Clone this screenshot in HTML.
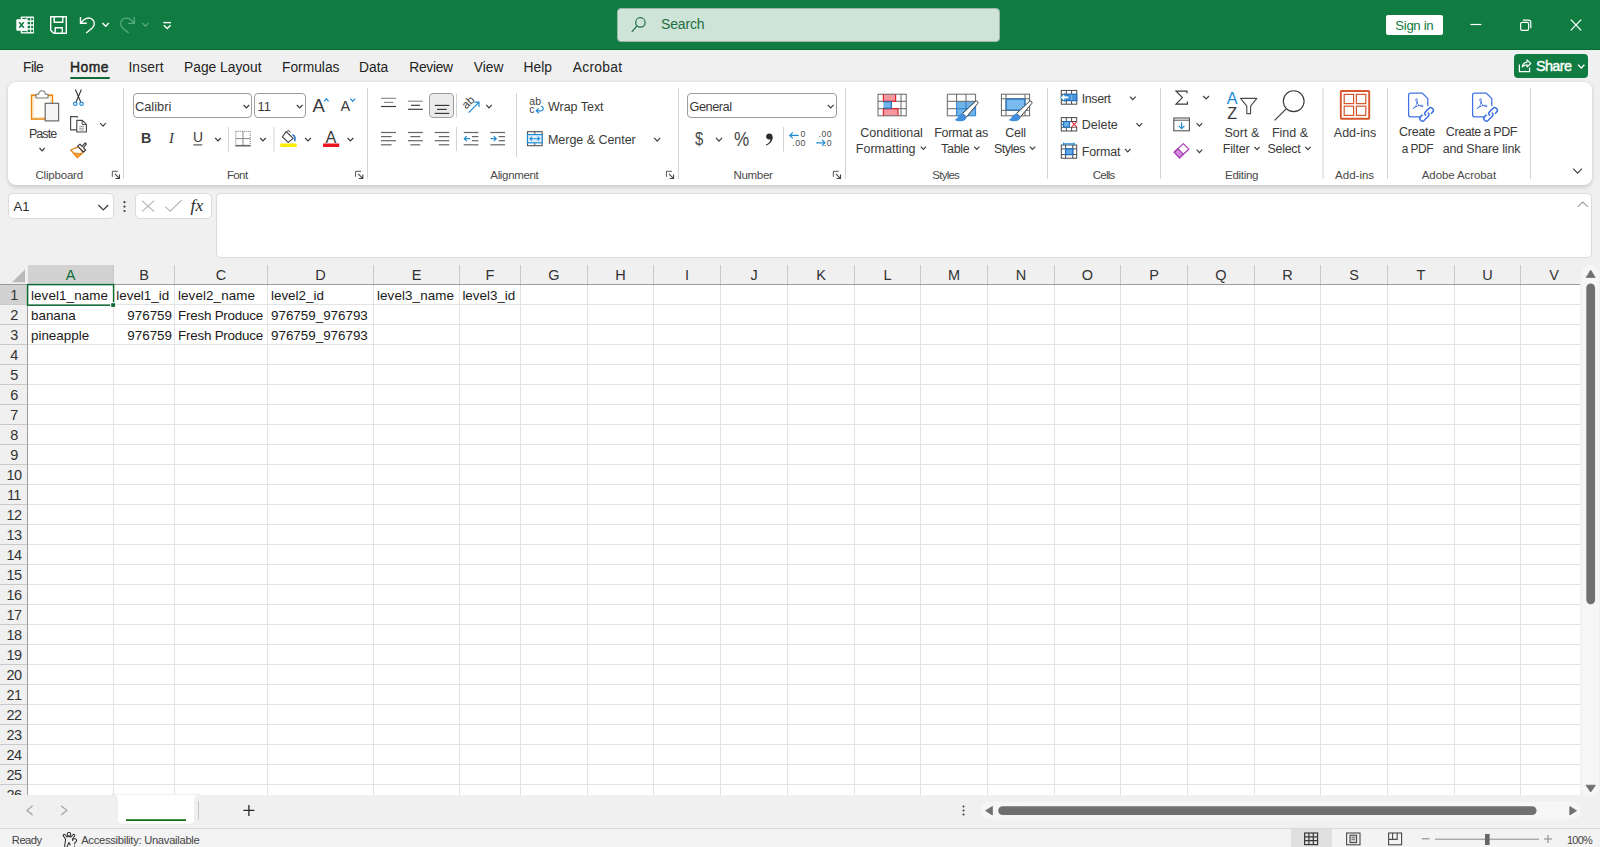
<!DOCTYPE html>
<html lang="en">
<head>
<meta charset="utf-8">
<title>Excel</title>
<style>
*{box-sizing:border-box;margin:0;padding:0}
html,body{width:1600px;height:847px;overflow:hidden;background:#f0f0f0}
body{font-family:"Liberation Sans",sans-serif;color:#242424;position:relative;font-size:13px}
.abs{position:absolute}
#title{left:0;top:0;width:1600px;height:50px;background:#107c41;border-bottom:1px solid #0b6a35}
#search{left:617px;top:8px;width:383px;height:33.5px;background:#cfe4d9;border-radius:4px;border:1px solid #9fb5a8}
#search span{position:absolute;left:43px;top:6.8px;font-size:14px;color:#1e6e42;letter-spacing:-.15px}
#signin{left:1386px;top:15px;width:56.6px;height:19.6px;background:#fff;border-radius:2px;color:#107c41;font-size:13.2px;text-align:center;line-height:21px;letter-spacing:-.35px}
.tab{top:59.6px;font-size:13.8px;color:#242424;white-space:nowrap}
#homeul{left:70px;top:77px;width:40px;height:2px;background:#0f6c36;border-radius:1px}
#share{left:1514px;top:53.5px;width:74.3px;height:24.5px;background:#107c41;border-radius:4px;color:#fff;font-size:14.4px;-webkit-text-stroke:.4px #fff}
#ribbon{left:8px;top:82px;width:1584px;height:103px;background:#fff;border-radius:8px;box-shadow:0 1.5px 4px rgba(0,0,0,.17)}
.sep{width:1px;background:#d6d6d6;top:89px;height:90px}
.glabel{top:168.5px;font-size:11.5px;color:#4a4a4a;white-space:nowrap;transform:translateX(-50%)}
.rt{font-size:12.5px;color:#3a3a3a;white-space:nowrap}
.ctr{transform:translateX(-50%);text-align:center}
.combo{background:#fff;border:1px solid #9c9c9c;border-radius:4px;height:24px}
#namebox{left:8px;top:193px;width:106px;height:25.6px;background:#fff;border-radius:5px;border:1px solid #dbdbdb}
#fxbox{left:135px;top:193px;width:77px;height:25.6px;background:#fff;border-radius:5px;border:1px solid #dbdbdb}
#fbar{left:216px;top:193px;width:1376.4px;height:64.6px;background:#fff;border-radius:5px;border:1px solid #dbdbdb}
#grid{left:0;top:265px;width:1580px;height:530px;background:#fff;overflow:hidden}
#colhdr{left:0;top:0;width:1580px;height:20px;background:#f0f0f0;border-bottom:1px solid #9b9b9b}
#rowhdr{left:0;top:20px;width:28px;height:520px;background:#f0f0f0;border-right:1px solid #9b9b9b}
.ch{top:0;height:19px;line-height:20px;font-size:14.5px;color:#333;text-align:center;border-right:1px solid #c9c9c9}
.rh{left:0;width:27px;height:20px;line-height:21px;font-size:14.5px;letter-spacing:-.55px;padding-left:.8px;color:#262626;text-align:center;border-bottom:1px solid #c9c9c9}
.vl{top:20px;width:1px;height:520px;background:#e3e3e3}
.hl{left:28px;height:1px;width:1552px;background:#e3e3e3}
.cell{height:20px;line-height:22px;font-size:13.4px;color:#1a1a1a;white-space:nowrap}
#tabbar{left:0;top:795px;width:1600px;height:33px;background:#f0f0f0}
#status{left:0;top:828px;width:1600px;height:19px;background:#f3f3f3;border-top:1px solid #d9d9d9;font-size:11.2px;color:#444;white-space:nowrap}
</style>
</head>
<body>
<!-- TITLE BAR -->
<div id="title" class="abs"></div>
<div id="search" class="abs"><span>Search</span></div>
<div id="signin" class="abs">Sign in</div>

<svg class="abs" style="left:0;top:0" width="200" height="50" fill="none" stroke="#fff" stroke-width="1.3">
<!-- excel icon -->
<g stroke="none" fill="#fff">
<path d="M21.5 16.5H33.2a.8.8 0 0 1 .8.8V32.7a.8.8 0 0 1-.8.8H21.5a.8.8 0 0 1-.8-.8V17.3a.8.8 0 0 1 .8-.8Z"/>
<rect x="16.3" y="19.3" width="10.4" height="11.4" rx="1"/>
</g>
<g stroke="none" fill="#107c41"><rect x="27.6" y="18" width="2.6" height="2.4"/><rect x="27.6" y="21.9" width="2.6" height="2.4"/><rect x="27.6" y="25.8" width="2.6" height="2.4"/><rect x="27.6" y="29.7" width="2.6" height="2.4"/><rect x="31.2" y="18" width="2.0" height="2.4"/><rect x="31.2" y="21.9" width="2.0" height="2.4"/><rect x="31.2" y="25.8" width="2.0" height="2.4"/><rect x="31.2" y="29.7" width="2.0" height="2.4"/><rect x="22.2" y="17.8" width="4.4" height="1.2"/><rect x="22.2" y="31" width="4.4" height="1.2"/></g>
<path d="M19.2 22.2L23.8 27.8M23.8 22.2L19.2 27.8" stroke="#107c41" stroke-width="1.5"/>
<!-- save -->
<path d="M50.7 16.7H66.3V33.3H53.7L50.7 30.3Z M54.2 16.7V22.3H62.8V16.7 M55.2 33.3V27.7H62.3V33.3" stroke-width="1.4" stroke-linejoin="round"/>
<!-- undo -->
<path d="M80.5 17V23.3H86.8" stroke-width="1.4"/>
<path d="M80.8 23C84 18.5 89 16.5 92.5 19.5C95.3 22.2 94.6 25.8 92 28.3L86.2 33" stroke-width="1.4"/>
<path d="M102.5 23L105.7 26.2L108.9 23" stroke-width="1.4"/>
<!-- redo faded -->
<g stroke="#58ab80">
<path d="M134.3 17V23.3H128" stroke-width="1.3"/>
<path d="M134 23C130.8 18.5 125.8 16.5 122.3 19.5C119.5 22.2 120.2 25.8 122.8 28.3L128.6 33" stroke-width="1.3"/>
<path d="M142.3 23L145.4 26.2L148.5 23" stroke-width="1.2"/>
</g>
<!-- qat -->
<path d="M163.3 22.6H171" stroke-width="1.4"/>
<path d="M163.8 25.3L167.2 28.6L170.6 25.3" stroke-width="1.4"/>
</svg>
<!-- TABS -->
<div class="abs tab" style="left:23px;letter-spacing:-.5px">File</div>
<div class="abs tab" style="left:70px;top:58.9px;font-size:13.9px;-webkit-text-stroke:.45px #242424;letter-spacing:.45px">Home</div>
<div class="abs tab" style="left:128.4px;letter-spacing:.12px">Insert</div>
<div class="abs tab" style="left:184px">Page Layout</div>
<div class="abs tab" style="left:282px">Formulas</div>
<div class="abs tab" style="left:359px">Data</div>
<div class="abs tab" style="left:409.3px;letter-spacing:-.3px">Review</div>
<div class="abs tab" style="left:473.8px">View</div>
<div class="abs tab" style="left:523.6px">Help</div>
<div class="abs tab" style="left:572.8px;letter-spacing:.27px">Acrobat</div>
<div id="homeul" class="abs"></div>
<div id="share" class="abs"><span class="abs" style="left:22px;top:4.4px;letter-spacing:-.62px">Share</span></div>

<svg class="abs" style="left:600px;top:0" width="1000" height="82" viewBox="600 0 1000 82" fill="none">
<circle cx="640.4" cy="22.4" r="4.7" stroke="#1e6e42" stroke-width="1.2"/><path d="M637 25.9L631.8 31.9" stroke="#1e6e42" stroke-width="1.2"/>
<path d="M1470.4 24.5H1481.4" stroke="#fff" stroke-width="1.2"/>
<rect x="1520.6" y="22.3" width="8" height="8" rx="1.6" stroke="#fff" stroke-width="1.2"/>
<path d="M1522.9 20.2H1528.4A2.4 2.4 0 0 1 1530.8 22.6V28.2" stroke="#fff" stroke-width="1.2"/>
<path d="M1570.8 19.6L1581.2 30.4M1581.2 19.6L1570.8 30.4" stroke="#fff" stroke-width="1.3"/>
<path d="M1519.4 64.4V71.6H1529.6V67.4" stroke="#fff" stroke-width="1.2"/>
<path d="M1522.2 67C1522.6 64.2 1524.4 62.4 1527 62.2V59.9L1530.8 63.5L1527 67V64.8C1525 64.8 1523.4 65.6 1522.2 67Z" stroke="#fff" stroke-width="1.1" stroke-linejoin="round"/>
<path d="M1578.2 64.8L1581.3 67.9L1584.4 64.8" stroke="#fff" stroke-width="1.4"/>
</svg>
<!-- RIBBON -->
<div id="ribbon" class="abs"></div>
<!--RB0-->
<div class="abs rt ctr" style="left:42.6px;top:127px;font-size:12.5px;letter-spacing:-0.91px;">Paste</div>
<div class="abs glabel" style="left:59.2px;letter-spacing:-0.18px">Clipboard</div>
<div class="abs combo" style="left:133px;top:93px;width:119px;height:25px"></div>
<div class="abs combo" style="left:254px;top:93px;width:52px;height:25px"></div>
<div class="abs rt" style="left:135px;top:99px;font-size:12.8px;">Calibri</div>
<div class="abs rt" style="left:257.5px;top:99px;font-size:12.8px;">11</div>
<div class="abs rt" style="left:312.5px;top:94.5px;font-size:18.5px;">A</div>
<div class="abs rt" style="left:340.5px;top:98px;font-size:14.5px;">A</div>
<div class="abs rt" style="left:141px;top:130px;font-size:14.3px;font-weight:bold">B</div>
<div class="abs rt" style="left:169px;top:129.5px;font-size:14.8px;font-family:'Liberation Serif',serif;font-style:italic">I</div>
<div class="abs rt" style="left:193px;top:130px;font-size:13.8px;">U</div>
<div class="abs rt" style="left:325.5px;top:127.5px;font-size:16.3px;">A</div>
<div class="abs glabel" style="left:237.2px;letter-spacing:-0.60px">Font</div>
<div class="abs" style="left:429px;top:93px;width:25.4px;height:25.4px;background:#ebebeb;border:1px solid #9d9d9d;border-radius:4px"></div>
<div class="abs rt" style="left:529.3px;top:96.5px;font-size:10.5px;line-height:8.4px;color:#444">ab<br>c</div>
<div class="abs rt" style="left:548px;top:100px;font-size:12.5px;letter-spacing:-0.03px;">Wrap Text</div>
<div class="abs rt" style="left:548px;top:133px;font-size:12.5px;letter-spacing:-0.04px;">Merge &amp; Center</div>
<div class="abs glabel" style="left:514.4px;letter-spacing:-0.33px">Alignment</div>
<div class="abs combo" style="left:687px;top:93px;width:150px;height:25px"></div>
<div class="abs rt" style="left:689.5px;top:99px;font-size:12.8px;letter-spacing:-0.50px;">General</div>
<div class="abs rt" style="left:695px;top:128.2px;font-size:19px;color:#4a4a4a;transform:scaleX(.78);transform-origin:0 0;">$</div>
<div class="abs rt" style="left:734.2px;top:128px;font-size:19.6px;color:#444;transform:scaleX(.87);transform-origin:0 0;">%</div>
<div class="abs glabel" style="left:753px;letter-spacing:-0.32px">Number</div>
<div class="abs rt ctr" style="left:891.6px;top:125.5px;font-size:12.5px;">Conditional</div>
<div class="abs rt ctr" style="left:885.7px;top:142px;font-size:12.5px;">Formatting</div>
<div class="abs rt ctr" style="left:961.1px;top:125.5px;font-size:12.5px;letter-spacing:-0.27px;">Format as</div>
<div class="abs rt ctr" style="left:955.3px;top:142px;font-size:12.5px;letter-spacing:-0.30px;">Table</div>
<div class="abs rt ctr" style="left:1015.6px;top:125.5px;font-size:12.5px;letter-spacing:-0.26px;">Cell</div>
<div class="abs rt ctr" style="left:1009.5px;top:142px;font-size:12.5px;letter-spacing:-0.47px;">Styles</div>
<div class="abs glabel" style="left:945.7px;letter-spacing:-0.75px">Styles</div>
<div class="abs rt" style="left:1081.7px;top:91.5px;font-size:12.5px;letter-spacing:-0.38px;">Insert</div>
<div class="abs rt" style="left:1081.7px;top:117.8px;font-size:12.5px;">Delete</div>
<div class="abs rt" style="left:1081.7px;top:145px;font-size:12.5px;letter-spacing:-0.18px;">Format</div>
<div class="abs glabel" style="left:1103.7px;letter-spacing:-0.75px">Cells</div>
<div class="abs rt" style="left:1226.8px;top:88.5px;font-size:16.2px;color:#1e8ad6">A</div>
<div class="abs rt" style="left:1227.2px;top:103.6px;font-size:16.2px;color:#3a3a3a">Z</div>
<div class="abs rt ctr" style="left:1241.9px;top:125.5px;font-size:12.5px;">Sort &amp;</div>
<div class="abs rt ctr" style="left:1236.2px;top:142px;font-size:12.5px;letter-spacing:-0.15px;">Filter</div>
<div class="abs rt ctr" style="left:1290px;top:125.5px;font-size:12.5px;">Find &amp;</div>
<div class="abs rt ctr" style="left:1284px;top:142px;font-size:12.5px;letter-spacing:-0.33px;">Select</div>
<div class="abs glabel" style="left:1241.6px;letter-spacing:-0.28px">Editing</div>
<div class="abs rt ctr" style="left:1355px;top:125.5px;font-size:12.5px;">Add-ins</div>
<div class="abs glabel" style="left:1354.6px">Add-ins</div>
<div class="abs rt ctr" style="left:1417px;top:125.2px;font-size:12.5px;letter-spacing:-0.27px;">Create</div>
<div class="abs rt ctr" style="left:1417.3px;top:142px;font-size:11.9px;letter-spacing:-0.50px;">a PDF</div>
<div class="abs rt ctr" style="left:1481.4px;top:125.2px;font-size:12.5px;letter-spacing:-0.44px;">Create a PDF</div>
<div class="abs rt ctr" style="left:1481.5px;top:141.6px;font-size:12.5px;letter-spacing:-0.16px;">and Share link</div>
<div class="abs glabel" style="left:1458.9px;letter-spacing:-0.09px">Adobe Acrobat</div>
<svg class="abs" style="left:0;top:80px" width="1600" height="110" viewBox="0 80 1600 110">
<g>
<rect x="31.6" y="95.2" width="20.8" height="23.8" fill="#fffdf7" stroke="#e8850f" stroke-width="1.6"/><rect x="33" y="96.6" width="18" height="21" fill="none" stroke="#fbe3b4" stroke-width="1.2"/>
<path d="M36 98V94.3H38.6C38.8 92 40.2 90.7 42 90.7S45.2 92 45.4 94.3H48V98Z" fill="#fff" stroke="#7a7a7a" stroke-width="1.1"/>
<rect x="45.2" y="103.3" width="13.4" height="17.6" fill="#f5f5f5" stroke="#6a6a6a" stroke-width="1.2"/>
</g>
<path d="M39.5 148.0L42.1 150.8L44.7 148.0" stroke="#3b3b3b" stroke-width="1.15" fill="none"/>
<g fill="none">
<path d="M75.4 89.5L80.6 101.8M81.4 89.5L76.2 101.8" stroke="#333" stroke-width="1.1"/>
<circle cx="75.3" cy="103.8" r="1.7" stroke="#1e8ad6" stroke-width="1.2"/>
<circle cx="81.5" cy="103.8" r="1.7" stroke="#1e8ad6" stroke-width="1.2"/>
</g>
<g fill="none" stroke="#4a4a4a" stroke-width="1.15">
<path d="M76.5 129.8H70.6V116.6H77L78 117.6"/>
<path d="M76.8 120.3H82.3L86.4 124.4V132H76.8Z" fill="#fff"/>
<path d="M82.2 120.5V124.6H86.2" stroke-width="1"/>
<path d="M79.2 126.6H84M79.2 128.3H84M79.2 130H84" stroke="#8a8a8a" stroke-width=".8"/>
</g>
<path d="M100.2 123.2L103.0 126.2L105.8 123.2" stroke="#3b3b3b" stroke-width="1.15" fill="none"/>
<g fill="none" stroke-linejoin="round">
<path d="M70.8 150L78.6 146.6L83 152.4L77.4 157.6Z" fill="#fff" stroke="#e07a10" stroke-width="1.3"/>
<path d="M74 153L81.6 153.6L77.4 157.4Z" fill="#f5a53a" stroke="#e07a10" stroke-width=".8"/>
<path d="M77.6 146.2L80 144.2L82 146.4L85.2 142.9L86.4 144.1L83.3 147.7L85.6 150L83.4 152Z" fill="#fff" stroke="#333" stroke-width="1.1"/>
</g>
<path d="M112.3 176.8V171.3H117.8" stroke="#555" stroke-width="1" fill="none"/><path d="M114.89999999999999 173.9L119.3 178.3M119.5 174.5V178.5H115.5" stroke="#444" stroke-width="1.1" fill="none"/>
<path d="M123.5 88V179" stroke="#d4d4d4" stroke-width="1"/>
<path d="M243.6 105.0L246.4 108.0L249.2 105.0" stroke="#3b3b3b" stroke-width="1.15" fill="none"/>
<path d="M296.8 105.0L299.7 108.0L302.6 105.0" stroke="#3b3b3b" stroke-width="1.15" fill="none"/>
<path d="M324.2 101.3L326.4 98.6L328.6 101.3" stroke="#1e8ad6" stroke-width="1.2" fill="none"/>
<path d="M350.4 98.6L352.8 101.4L355.2 98.6" stroke="#1e8ad6" stroke-width="1.2" fill="none"/>
<path d="M193.3 144.9H202.3" stroke="#444" stroke-width="1.1"/>
<path d="M215.2 138.0L218.0 141.0L220.8 138.0" stroke="#3b3b3b" stroke-width="1.15" fill="none"/>
<path d="M228.5 127V151.5" stroke="#d4d4d4" stroke-width="1"/>
<g fill="none" stroke="#777" stroke-width="1">
<path d="M235.8 131.4H250.2V144.8M235.8 131.4V144.8" stroke-dasharray="1 1"/>
<path d="M243 131.4V145M235.8 138.6H250.2" stroke="#8a8a8a"/>
<path d="M235.3 145.7H250.7" stroke="#666" stroke-width="1.6"/>
</g>
<path d="M260.2 138.0L263.0 141.0L265.8 138.0" stroke="#3b3b3b" stroke-width="1.15" fill="none"/>
<path d="M274.0 127V151.5" stroke="#d4d4d4" stroke-width="1"/>
<g fill="none">
<path d="M286.2 131.6L293.2 138.4L288.2 142.4L282.4 136.8Z" stroke="#3a3a3a" stroke-width="1.1" stroke-linejoin="round"/>
<path d="M286.6 131.5C288 130 290 130.8 290.4 132.6" stroke="#3a3a3a" stroke-width="1"/>
<path d="M292.4 134.6C294.6 135.6 295.4 138.5 294.6 141.2" stroke="#1c6fc4" stroke-width="1.5"/>
<rect x="280.3" y="143.5" width="16.4" height="3.5" fill="#ffee00"/>
</g>
<path d="M305.2 138.0L308.0 141.0L310.9 138.0" stroke="#3b3b3b" stroke-width="1.15" fill="none"/>
<rect x="323" y="143.5" width="16.2" height="3.5" fill="#f0141e"/>
<path d="M347.5 138.0L350.4 141.0L353.3 138.0" stroke="#3b3b3b" stroke-width="1.15" fill="none"/>
<path d="M355.6 176.8V171.3H361.1" stroke="#555" stroke-width="1" fill="none"/><path d="M358.20000000000005 173.9L362.6 178.3M362.8 174.5V178.5H358.8" stroke="#444" stroke-width="1.1" fill="none"/>
<path d="M367.5 88V179" stroke="#d4d4d4" stroke-width="1"/>
<path d="M381 98.3H396" stroke="#8a8a8a" stroke-width="1.15"/><path d="M384 102.4H393.4" stroke="#8a8a8a" stroke-width="1.15"/><path d="M381 106.5H396" stroke="#3a3a3a" stroke-width="1.15"/>
<path d="M408 101.2H422.8" stroke="#8a8a8a" stroke-width="1.15"/><path d="M411 105.3H420" stroke="#3a3a3a" stroke-width="1.15"/><path d="M408 109.3H422.8" stroke="#3a3a3a" stroke-width="1.15"/>
<path d="M434.7 105.4H449.3" stroke="#3a3a3a" stroke-width="1.15"/><path d="M437 109.4H446.8" stroke="#3a3a3a" stroke-width="1.15"/><path d="M434.7 113.4H449.3" stroke="#3a3a3a" stroke-width="1.15"/>
<path d="M456.5 93.5V117.5" stroke="#d4d4d4" stroke-width="1"/>
<text x="0" y="0" transform="translate(466.2,109.6) rotate(-45)" font-family="Liberation Sans,sans-serif" font-size="11.4" fill="#3a3a3a">ab</text>
<path d="M468.6 112.6L478.6 102.6M474.2 102.2H479V107" stroke="#1e8ad6" stroke-width="1.2" fill="none"/>
<path d="M486.2 104.9L489.0 107.9L491.8 104.9" stroke="#3b3b3b" stroke-width="1.15" fill="none"/>
<path d="M381 132.5H396" stroke="#666" stroke-width="1.2"/><path d="M381 136.6H391.6" stroke="#666" stroke-width="1.2"/><path d="M381 140.7H396" stroke="#666" stroke-width="1.2"/><path d="M381 144.8H391.6" stroke="#666" stroke-width="1.2"/>
<path d="M408 132.5H422.8" stroke="#666" stroke-width="1.2"/><path d="M410.4 136.6H420.2" stroke="#666" stroke-width="1.2"/><path d="M408 140.7H422.8" stroke="#666" stroke-width="1.2"/><path d="M410.4 144.8H420.2" stroke="#666" stroke-width="1.2"/>
<path d="M434.7 132.5H449.3" stroke="#666" stroke-width="1.2"/><path d="M438.8 136.6H449.3" stroke="#666" stroke-width="1.2"/><path d="M434.7 140.7H449.3" stroke="#666" stroke-width="1.2"/><path d="M438.8 144.8H449.3" stroke="#666" stroke-width="1.2"/>
<path d="M456.5 127V151.5" stroke="#d4d4d4" stroke-width="1"/>
<path d="M463.7 132.5H478.4" stroke="#666" stroke-width="1.2"/><path d="M471.9 136.6H478.4" stroke="#666" stroke-width="1.2"/><path d="M471.9 140.7H478.4" stroke="#666" stroke-width="1.2"/><path d="M463.7 144.8H478.4" stroke="#666" stroke-width="1.2"/>
<path d="M464.3 138.7H470M466.8 136.2L464.3 138.7L466.8 141.2" stroke="#1e8ad6" stroke-width="1.2" fill="none"/>
<path d="M490.4 132.5H505" stroke="#666" stroke-width="1.2"/><path d="M498.6 136.6H505" stroke="#666" stroke-width="1.2"/><path d="M498.6 140.7H505" stroke="#666" stroke-width="1.2"/><path d="M490.4 144.8H505" stroke="#666" stroke-width="1.2"/>
<path d="M490.6 138.7H496.2M493.8 136.2L496.3 138.7L493.8 141.2" stroke="#1e8ad6" stroke-width="1.2" fill="none"/>
<path d="M516.5 93V157" stroke="#d4d4d4" stroke-width="1"/>
<path d="M541 106.3C543.8 106.5 544.2 110.7 541 110.8H536.4M538.8 108.3L536.2 110.8L538.8 113.3" stroke="#1e8ad6" stroke-width="1.15" fill="none"/>
<g fill="none">
<rect x="527.5" y="131.7" width="14.6" height="14" stroke="#555" stroke-width="1.1"/>
<path d="M534.8 131.7V134.6M534.8 142.8V145.7" stroke="#555" stroke-width="1"/>
<rect x="527.5" y="134.6" width="14.6" height="8.2" fill="#e6f2fb" stroke="#1e8ad6" stroke-width="1.2"/>
<path d="M530 138.7H539.6M532 136.7L530 138.7L532 140.7M537.6 136.7L539.6 138.7L537.6 140.7" stroke="#1e8ad6" stroke-width="1.1"/>
</g>
<path d="M654.2 137.9L657.2 141.2L660.2 137.9" stroke="#3b3b3b" stroke-width="1.15" fill="none"/>
<path d="M666.4 176.8V171.3H671.9" stroke="#555" stroke-width="1" fill="none"/><path d="M669.0 173.9L673.4 178.3M673.6 174.5V178.5H669.6" stroke="#444" stroke-width="1.1" fill="none"/>
<path d="M678.5 88V179" stroke="#d4d4d4" stroke-width="1"/>
<path d="M827.8 104.9L830.7 108.0L833.6 104.9" stroke="#3b3b3b" stroke-width="1.15" fill="none"/>
<path d="M716.0 137.9L719.0 141.2L722.0 137.9" stroke="#3b3b3b" stroke-width="1.15" fill="none"/>
<path d="M769.4 133.6a3 3 0 1 0 1.2 5.6c-.3 2.4-2 4.2-4.8 5.4l.5.9c4.2-1.6 6.4-4.6 6.4-8.2c0-2.2-1.4-3.7-3.3-3.7Z" fill="#2a2a2a"/>
<path d="M783.5 127V151.5" stroke="#d4d4d4" stroke-width="1"/>
<g font-family="Liberation Sans,sans-serif" font-size="8.7" fill="#4a4a4a" letter-spacing=".5">
<text x="800.5" y="137.3">0</text><text x="792.3" y="146.4">.00</text>
<text x="818.5" y="137.3">.00</text><text x="823.9" y="146.4">.0</text>
</g>
<path d="M789.8 135.4H798.6M792.8 132.4L789.8 135.4L792.8 138.4" stroke="#1e8ad6" stroke-width="1.2" fill="none"/>
<path d="M816.2 142.8H825M822 139.8L825 142.8L822 145.8" stroke="#1e8ad6" stroke-width="1.2" fill="none"/>
<path d="M833.3 176.8V171.3H838.8" stroke="#555" stroke-width="1" fill="none"/><path d="M835.9 173.9L840.3 178.3M840.5 174.5V178.5H836.5" stroke="#444" stroke-width="1.1" fill="none"/>
<path d="M845.5 88V179" stroke="#d4d4d4" stroke-width="1"/>
<g>
<rect x="883.4" y="94.2" width="12.2" height="6.8" fill="#f8969e"/>
<rect x="883.4" y="109" width="14.4" height="6.8" fill="#f8969e"/>
<rect x="883.4" y="102" width="7.8" height="6" fill="#6fb2e8"/>
<g fill="none" stroke="#666" stroke-width="1">
<rect x="878" y="94.2" width="28.2" height="21.6"/>
<path d="M878 101.3H906.2M878 108.7H906.2M901 94.2V115.8"/>
</g>
<path d="M883.4 94.2V101.3H895.6V94.2M883.4 115.8V108.7H898V115.8" stroke="#e0262e" stroke-width="1.2" fill="none"/>
<path d="M883.4 101.7H891.4V108.3H883.4" stroke="#1c6fc4" stroke-width="1.1" fill="none"/>
</g>
<path d="M920.8 146.6L923.4 149.4L926.0 146.6" stroke="#3b3b3b" stroke-width="1.15" fill="none"/>
<g>
<rect x="956.6" y="101.4" width="19" height="14.4" fill="#6fb2e8"/>
<g fill="none" stroke="#666" stroke-width="1">
<path d="M947.3 115.8V94.2H975.6V101"/>
<path d="M947.3 101.3H975.6M947.3 108.7H957M956.6 94.2V101.3M966 94.2V101.3M947.3 115.8H957"/>
</g>
<path d="M956.6 101.4V115.8M966 101.4V115.8M956.6 108.7H975.6M956.6 115.8H975.6M975.6 101.4V115.8" stroke="#2a7fd0" stroke-width="1" fill="none"/>
<path d="M962.6 113.4L975.4 101.4C976.6 100.4 978.8 101.8 977.8 103.4L966.4 117Z" fill="#fff" stroke="#3a3a3a" stroke-width="1"/>
<path d="M962.4 113.4L966.6 117.2C966.2 120.8 960.4 122.8 954.4 119.9C957.8 119.3 958 114.2 962.4 113.4Z" fill="#3f8fdc"/>
</g>
<path d="M974.2 146.6L976.8 149.4L979.4 146.6" stroke="#3b3b3b" stroke-width="1.15" fill="none"/>
<g>
<rect x="1006" y="98.8" width="19" height="11.6" fill="#6fb2e8" stroke="#2a7fd0" stroke-width="1"/>
<g fill="none" stroke="#666" stroke-width="1">
<rect x="1001.4" y="94.2" width="28.2" height="21.6"/>
<path d="M1001.4 98.8H1029.6M1001.4 110.4H1029.6M1006 94.2V115.8M1025 94.2V115.8"/>
</g>
<rect x="1006.5" y="99.3" width="18" height="10.6" fill="#7bbaee" stroke="#2a7fd0" stroke-width="1"/>
<path d="M1016.6 113.4L1029.4 101.4C1030.6 100.4 1032.8 101.8 1031.8 103.4L1020.4 117Z" fill="#fff" stroke="#3a3a3a" stroke-width="1"/>
<path d="M1016.4 113.4L1020.6 117.2C1020.2 120.8 1014.4 122.8 1008.4 119.9C1011.8 119.3 1012 114.2 1016.4 113.4Z" fill="#3f8fdc"/>
</g>
<path d="M1029.8 146.6L1032.5 149.4L1035.2 146.6" stroke="#3b3b3b" stroke-width="1.15" fill="none"/>
<path d="M1047.5 88V179" stroke="#d4d4d4" stroke-width="1"/>
<g fill="none" stroke="#4a4a4a" stroke-width="1"><rect x="1061.3" y="90.4" width="15.4" height="13.8"/><path d="M1061.3 94.3H1076.7M1061.3 100.6H1076.7M1066.3 90.4V104.2M1071.6 90.4V104.2"/></g>
<rect x="1066.8" y="94.3" width="10.1" height="6.3" fill="#4a96dc" stroke="#1c6fc4" stroke-width="1"/><path d="M1071.6 94.6V100.4" stroke="#8cc2f0" stroke-width=".8"/><path d="M1060.6 97.4L1064.6 93.2V95.9H1069V98.9H1064.6V101.6Z" fill="#fff" stroke="#1e8ad6" stroke-width="1" stroke-linejoin="round"/>
<path d="M1130.0 96.6L1132.8 99.6L1135.7 96.6" stroke="#3b3b3b" stroke-width="1.15" fill="none"/>
<g fill="none" stroke="#4a4a4a" stroke-width="1"><rect x="1061.3" y="117.6" width="15.4" height="13.4"/><path d="M1061.3 121.5H1076.7M1061.3 127.2H1076.7M1066.3 117.6V131M1071.6 117.6V131"/></g>
<rect x="1062.4" y="122" width="15" height="4.7" fill="#fff"/><rect x="1063.6" y="121.6" width="5.8" height="5.5" fill="#6fb2e8" stroke="#1c6fc4" stroke-width="1.1"/><path d="M1061 124.4H1063.4" stroke="#1c6fc4" stroke-width="1.1"/><path d="M1071.8 121.8L1076.6 126.8M1076.6 121.8L1071.8 126.8" stroke="#e8323c" stroke-width="1.15"/>
<path d="M1136.4 123.2L1139.3 126.2L1142.2 123.2" stroke="#3b3b3b" stroke-width="1.15" fill="none"/>
<g fill="none" stroke="#4a4a4a" stroke-width="1"><rect x="1061.3" y="145" width="15.4" height="13.2"/><path d="M1061.3 148.9H1076.7M1061.3 154.6H1076.7M1065.6 145V158.2M1072.8 145V158.2"/></g>
<rect x="1065.6" y="148.9" width="7.2" height="5.7" fill="#5ea6e4" stroke="#1c6fc4" stroke-width="1.2"/><path d="M1063.6 143.9H1074.2M1063.6 142.5V145.3M1074.2 142.5V145.3" stroke="#1e8ad6" stroke-width="1.1" fill="none"/>
<path d="M1125.0 148.9L1127.8 151.9L1130.5 148.9" stroke="#3b3b3b" stroke-width="1.15" fill="none"/>
<path d="M1160.5 88V179" stroke="#d4d4d4" stroke-width="1"/>
<path d="M1187 93.6V91.1H1176L1182.4 97.6L1176 104.1H1187.4V101.6" stroke="#3a3a3a" stroke-width="1.15" fill="none" stroke-linejoin="miter"/>
<path d="M1203.2 96.0L1206.1 99.0L1209.0 96.0" stroke="#3b3b3b" stroke-width="1.15" fill="none"/>
<rect x="1173.8" y="118" width="15.6" height="12.8" fill="#fff" stroke="#555" stroke-width="1.1"/><path d="M1173.8 120.2H1189.4" stroke="#555" stroke-width="1"/><path d="M1181.6 122.2V128.4M1178.8 125.8L1181.6 128.6L1184.4 125.8" stroke="#1e8ad6" stroke-width="1.2" fill="none"/>
<path d="M1196.6 123.2L1199.4 126.2L1202.2 123.2" stroke="#3b3b3b" stroke-width="1.15" fill="none"/>
<path d="M1174.2 152.2L1183.4 143.6L1188.8 149.2L1179.6 157.8Z" fill="#fff" stroke="#a33bb0" stroke-width="1.2" stroke-linejoin="round"/><path d="M1174.2 152.2L1178 148.7L1183.4 154.3L1179.6 157.8Z" fill="#d48ddc" stroke="#a33bb0" stroke-width="1.2" stroke-linejoin="round"/>
<path d="M1196.6 149.6L1199.4 152.6L1202.2 149.6" stroke="#3b3b3b" stroke-width="1.15" fill="none"/>
<path d="M1240.6 98.4H1256.8L1250.6 106.2V113.6H1246.8V106.2Z" fill="#fff" stroke="#4a4a4a" stroke-width="1.1" stroke-linejoin="round"/>
<path d="M1254.4 146.8L1257.0 149.6L1259.6 146.8" stroke="#3b3b3b" stroke-width="1.15" fill="none"/>
<circle cx="1293.7" cy="101.2" r="10.4" fill="#fff" stroke="#3a3a3a" stroke-width="1.15"/><path d="M1286.2 108.8L1274.6 120.4" stroke="#3a3a3a" stroke-width="1.15"/>
<path d="M1305.2 146.8L1307.9 149.6L1310.6 146.8" stroke="#3b3b3b" stroke-width="1.15" fill="none"/>
<path d="M1323.0 88V179" stroke="#d4d4d4" stroke-width="1"/>
<g fill="none" stroke="#d8572a">
<rect x="1340.8" y="91" width="28.4" height="27.8" stroke-width="1.9" rx=".8"/>
<rect x="1344.2" y="94.4" width="9.4" height="9.2" stroke-width="1.2"/>
<rect x="1356.4" y="94.4" width="9.4" height="9.2" stroke-width="1.2"/>
<rect x="1344.2" y="106.2" width="9.4" height="9.2" stroke-width="1.2"/>
<rect x="1356.4" y="106.2" width="9.4" height="9.2" stroke-width="1.2"/>
</g>
<path d="M1387.5 88V179" stroke="#d4d4d4" stroke-width="1"/>
<g fill="none" stroke="#3f72e2" stroke-width="1.25" stroke-linecap="round" stroke-linejoin="round">
<path d="M1419.6000000000001 116.8H1410.6000000000001A2 2 0 0 1 1408.6000000000001 114.8V95A2 2 0 0 1 1410.6000000000001 93H1422.2L1427.8 98.6V105.4"/>
<path d="M1413.2 108.6C1416.2 107 1417.8 102 1417.2 99.4C1416.9 98.2 1415.8 98.4 1415.8 99.6C1415.9 102.6 1419.2 106.2 1422.2 106.6C1423.6000000000001 106.7 1423.4 105.2 1421.8 105.2C1418.8 105.3 1415.2 106.6 1413.4 108.4" stroke-width=".9"/>
<g transform="translate(1430.7 110.3) rotate(-45)"><path d="M-7.1 -.2A2.6 2.6 0 0 1 -4.5 -2.6H0A2.6 2.6 0 0 1 0 2.6H-1.6" stroke-width="1.5"/></g>
<g transform="translate(1422.45 118.45) rotate(-45)"><path d="M2.1 -2.6H0A2.6 2.6 0 0 0 0 2.6H5.4A2.6 2.6 0 0 0 8 .3" stroke-width="1.5"/></g>
</g>
<g fill="none" stroke="#3f72e2" stroke-width="1.25" stroke-linecap="round" stroke-linejoin="round">
<path d="M1483.6000000000001 116.8H1474.6000000000001A2 2 0 0 1 1472.6000000000001 114.8V95A2 2 0 0 1 1474.6000000000001 93H1486.2L1491.8 98.6V105.4"/>
<path d="M1477.2 108.6C1480.2 107 1481.8 102 1481.2 99.4C1480.9 98.2 1479.8 98.4 1479.8 99.6C1479.9 102.6 1483.2 106.2 1486.2 106.6C1487.6000000000001 106.7 1487.4 105.2 1485.8 105.2C1482.8 105.3 1479.2 106.6 1477.4 108.4" stroke-width=".9"/>
<g transform="translate(1494.7 110.3) rotate(-45)"><path d="M-7.1 -.2A2.6 2.6 0 0 1 -4.5 -2.6H0A2.6 2.6 0 0 1 0 2.6H-1.6" stroke-width="1.5"/></g>
<g transform="translate(1486.45 118.45) rotate(-45)"><path d="M2.1 -2.6H0A2.6 2.6 0 0 0 0 2.6H5.4A2.6 2.6 0 0 0 8 .3" stroke-width="1.5"/></g>
</g>
<path d="M1530.5 88V179" stroke="#d4d4d4" stroke-width="1"/>
<path d="M1573.2 168.6L1577.6 173.2L1582.0 168.6" stroke="#3a3a3a" stroke-width="1.1" fill="none"/>
</svg>
<!--RB1-->

<!-- FORMULA BAR -->
<div id="namebox" class="abs"><span class="abs" style="left:4.5px;top:5px;font-size:13px;color:#2a2a2a">A1</span></div>
<div id="fxbox" class="abs"></div>
<div id="fbar" class="abs"></div>
<svg class="abs" style="left:0;top:190px" width="1600" height="70" viewBox="0 190 1600 70" fill="none">
<path d="M98.4 205L103.3 209.9L108.2 205" stroke="#3a3a3a" stroke-width="1.2"/>
<circle cx="124.5" cy="202.2" r="1.1" fill="#3a3a3a"/><circle cx="124.5" cy="206.6" r="1.1" fill="#3a3a3a"/><circle cx="124.5" cy="211" r="1.1" fill="#3a3a3a"/>
<path d="M142 200.6L154.2 211.6M154.2 200.6L142 211.6" stroke="#b4b4b4" stroke-width="1.1"/>
<path d="M165.2 206.6L170.2 211.2L181.6 200.2" stroke="#b4b4b4" stroke-width="1.1"/>
<text x="190.6" y="211" font-family="Liberation Serif,serif" font-style="italic" font-size="17.5" fill="#2a2a2a">fx</text>
<path d="M1577.6 206.8L1582.8 202L1588 206.8" stroke="#9a9a9a" stroke-width="1.1"/>
</svg>

<!-- GRID -->
<div id="grid" class="abs">
<div id="colhdr" class="abs"></div>
<div id="rowhdr" class="abs"></div>
<div class="abs" style="left:28px;top:0;width:85px;height:19px;background:#d2d2d2;"></div>
<div class="abs" style="left:0;top:20px;width:27px;height:20px;background:#d2d2d2"></div>
<svg class="abs" style="left:0;top:0" width="28" height="20"><path d="M25 4.5V17.2H12Z" fill="#b9b9b9"/></svg>
<div class="abs ch" style="left:28px;width:86px;color:#0e6a35">A</div>
<div class="abs ch" style="left:114px;width:61px;color:#333">B</div>
<div class="abs ch" style="left:175px;width:93px;color:#333">C</div>
<div class="abs ch" style="left:268px;width:106px;color:#333">D</div>
<div class="abs ch" style="left:374px;width:86px;color:#333">E</div>
<div class="abs ch" style="left:460px;width:61px;color:#333">F</div>
<div class="abs ch" style="left:521px;width:67px;color:#333">G</div>
<div class="abs ch" style="left:588px;width:66px;color:#333">H</div>
<div class="abs ch" style="left:654px;width:67px;color:#333">I</div>
<div class="abs ch" style="left:721px;width:67px;color:#333">J</div>
<div class="abs ch" style="left:788px;width:67px;color:#333">K</div>
<div class="abs ch" style="left:855px;width:66px;color:#333">L</div>
<div class="abs ch" style="left:921px;width:67px;color:#333">M</div>
<div class="abs ch" style="left:988px;width:67px;color:#333">N</div>
<div class="abs ch" style="left:1055px;width:66px;color:#333">O</div>
<div class="abs ch" style="left:1121px;width:67px;color:#333">P</div>
<div class="abs ch" style="left:1188px;width:67px;color:#333">Q</div>
<div class="abs ch" style="left:1255px;width:66px;color:#333">R</div>
<div class="abs ch" style="left:1321px;width:67px;color:#333">S</div>
<div class="abs ch" style="left:1388px;width:67px;color:#333">T</div>
<div class="abs ch" style="left:1455px;width:66px;color:#333">U</div>
<div class="abs ch" style="left:1521px;width:67px;color:#333">V</div>
<div class="abs vl" style="left:113px"></div>
<div class="abs vl" style="left:174px"></div>
<div class="abs vl" style="left:267px"></div>
<div class="abs vl" style="left:373px"></div>
<div class="abs vl" style="left:459px"></div>
<div class="abs vl" style="left:520px"></div>
<div class="abs vl" style="left:587px"></div>
<div class="abs vl" style="left:653px"></div>
<div class="abs vl" style="left:720px"></div>
<div class="abs vl" style="left:787px"></div>
<div class="abs vl" style="left:854px"></div>
<div class="abs vl" style="left:920px"></div>
<div class="abs vl" style="left:987px"></div>
<div class="abs vl" style="left:1054px"></div>
<div class="abs vl" style="left:1120px"></div>
<div class="abs vl" style="left:1187px"></div>
<div class="abs vl" style="left:1254px"></div>
<div class="abs vl" style="left:1320px"></div>
<div class="abs vl" style="left:1387px"></div>
<div class="abs vl" style="left:1454px"></div>
<div class="abs vl" style="left:1520px"></div>
<div class="abs rh" style="top:20px;color:#333">1</div>
<div class="abs hl" style="top:39px"></div>
<div class="abs rh" style="top:40px;color:#333">2</div>
<div class="abs hl" style="top:59px"></div>
<div class="abs rh" style="top:60px;color:#333">3</div>
<div class="abs hl" style="top:79px"></div>
<div class="abs rh" style="top:80px;color:#333">4</div>
<div class="abs hl" style="top:99px"></div>
<div class="abs rh" style="top:100px;color:#333">5</div>
<div class="abs hl" style="top:119px"></div>
<div class="abs rh" style="top:120px;color:#333">6</div>
<div class="abs hl" style="top:139px"></div>
<div class="abs rh" style="top:140px;color:#333">7</div>
<div class="abs hl" style="top:159px"></div>
<div class="abs rh" style="top:160px;color:#333">8</div>
<div class="abs hl" style="top:179px"></div>
<div class="abs rh" style="top:180px;color:#333">9</div>
<div class="abs hl" style="top:199px"></div>
<div class="abs rh" style="top:200px;color:#333">10</div>
<div class="abs hl" style="top:219px"></div>
<div class="abs rh" style="top:220px;color:#333">11</div>
<div class="abs hl" style="top:239px"></div>
<div class="abs rh" style="top:240px;color:#333">12</div>
<div class="abs hl" style="top:259px"></div>
<div class="abs rh" style="top:260px;color:#333">13</div>
<div class="abs hl" style="top:279px"></div>
<div class="abs rh" style="top:280px;color:#333">14</div>
<div class="abs hl" style="top:299px"></div>
<div class="abs rh" style="top:300px;color:#333">15</div>
<div class="abs hl" style="top:319px"></div>
<div class="abs rh" style="top:320px;color:#333">16</div>
<div class="abs hl" style="top:339px"></div>
<div class="abs rh" style="top:340px;color:#333">17</div>
<div class="abs hl" style="top:359px"></div>
<div class="abs rh" style="top:360px;color:#333">18</div>
<div class="abs hl" style="top:379px"></div>
<div class="abs rh" style="top:380px;color:#333">19</div>
<div class="abs hl" style="top:399px"></div>
<div class="abs rh" style="top:400px;color:#333">20</div>
<div class="abs hl" style="top:419px"></div>
<div class="abs rh" style="top:420px;color:#333">21</div>
<div class="abs hl" style="top:439px"></div>
<div class="abs rh" style="top:440px;color:#333">22</div>
<div class="abs hl" style="top:459px"></div>
<div class="abs rh" style="top:460px;color:#333">23</div>
<div class="abs hl" style="top:479px"></div>
<div class="abs rh" style="top:480px;color:#333">24</div>
<div class="abs hl" style="top:499px"></div>
<div class="abs rh" style="top:500px;color:#333">25</div>
<div class="abs hl" style="top:519px"></div>
<div class="abs rh" style="top:520px;color:#333">26</div>
<div class="abs hl" style="top:539px"></div>
<div class="abs rh" style="top:540px;color:#333">27</div>
<div class="abs hl" style="top:559px"></div>
<div class="abs cell" style="left:31px;top:20px;letter-spacing:.1px">level1_name</div>
<div class="abs cell" style="left:116.3px;top:20px">level1_id</div>
<div class="abs cell" style="left:178px;top:20px;letter-spacing:.1px">level2_name</div>
<div class="abs cell" style="left:271px;top:20px">level2_id</div>
<div class="abs cell" style="left:377px;top:20px;letter-spacing:.1px">level3_name</div>
<div class="abs cell" style="left:462.4px;top:20px">level3_id</div>
<div class="abs cell" style="left:31px;top:40px">banana</div>
<div class="abs cell" style="left:114px;top:40px;width:58px;text-align:right">976759</div>
<div class="abs cell" style="left:178px;top:40px;letter-spacing:-.22px">Fresh Produce</div>
<div class="abs cell" style="left:271px;top:40px">976759_976793</div>
<div class="abs cell" style="left:31px;top:60px">pineapple</div>
<div class="abs cell" style="left:114px;top:60px;width:58px;text-align:right">976759</div>
<div class="abs cell" style="left:178px;top:60px;letter-spacing:-.22px">Fresh Produce</div>
<div class="abs cell" style="left:271px;top:60px">976759_976793</div>
<svg class="abs" style="left:20px;top:12px" width="110" height="40"><rect x="7.6" y="7.6" width="86" height="20.6" fill="none" stroke="#0e6a35" stroke-width="1.5"/><rect x="90.2" y="25.2" width="5.4" height="5.2" fill="#fff"/><rect x="91.2" y="26.2" width="3.9" height="3.7" fill="#0e6a35"/></svg>

</div>

<!-- SCROLLBARS / TABBAR -->
<div id="tabbar" class="abs"></div>
<svg class="abs" style="left:0;top:260px;z-index:5" width="1600" height="587" viewBox="0 260 1600 587" fill="none">
<!-- vertical scrollbar -->
<rect x="1581.5" y="265" width="17.5" height="532" rx="8.7" fill="#f6f6f6"/>
<path d="M1586.2 277.4L1590.7 270.2L1595.2 277.4Z" fill="#707070" stroke="#707070" stroke-width=".8" stroke-linejoin="round"/>
<rect x="1586.3" y="283.4" width="8.8" height="320.8" rx="4.4" fill="#707070"/>
<path d="M1586 785.2L1590.7 792L1595.4 785.2Z" fill="#707070" stroke="#707070" stroke-width=".8" stroke-linejoin="round"/>
<!-- sheet tab -->
<path d="M112 794.5H199.8V794.8C196.6 794.8 194.6 796.8 194.6 800V820A4.4 4.4 0 0 1 190.2 824.4H121.8A4.4 4.4 0 0 1 117.4 820V800C117.4 796.8 115.4 794.8 112 794.8Z" fill="#fff" stroke="#e6e6e6" stroke-width=".6"/>
<path d="M126 820.2H186" stroke="#0f6c14" stroke-width="1.7"/>
<path d="M32.6 805.8L27 810.4L32.6 815M61.2 805.8L66.8 810.4L61.2 815" stroke="#a0a0a0" stroke-width="1.2"/>
<path d="M198.5 801.5V819.8" stroke="#c6c6c6" stroke-width="1"/>
<path d="M243.4 810.4H254.4M248.9 804.9V815.9" stroke="#2a2a2a" stroke-width="1.3"/>
<!-- h scrollbar -->
<rect x="980.5" y="801.8" width="600.5" height="17.6" rx="8.8" fill="#f6f6f6"/>
<circle cx="963.5" cy="806.6" r="1" fill="#3a3a3a"/><circle cx="963.5" cy="810.6" r="1" fill="#3a3a3a"/><circle cx="963.5" cy="814.6" r="1" fill="#3a3a3a"/>
<path d="M992.4 806.4L985.6 810.7L992.4 815Z" fill="#707070" stroke="#707070" stroke-width=".8" stroke-linejoin="round"/>
<rect x="998.2" y="806.2" width="538.4" height="8.8" rx="4.4" fill="#707070"/>
<path d="M1569.8 806.4L1576.6 810.7L1569.8 815Z" fill="#707070" stroke="#707070" stroke-width=".8" stroke-linejoin="round"/>
<!-- status icons -->
<rect x="1291" y="829" width="41" height="18" fill="#e0e0e0"/>
<g stroke="#3a3a3a" stroke-width="1.2">
<rect x="1304.6" y="833" width="13" height="11.6"/>
<path d="M1304.6 836.9H1317.6M1304.6 840.7H1317.6M1308.9 833V844.6M1313.3 833V844.6"/>
</g>
<g stroke="#4a4a4a" stroke-width="1.1">
<rect x="1346.6" y="833" width="13.4" height="11.8"/>
<rect x="1350" y="835.2" width="6.6" height="7.4" fill="#cfcfcf"/>
<path d="M1351.8 837.4H1354.8M1351.8 839.4H1354.8" stroke-width=".7"/>
</g>
<g stroke="#4a4a4a" stroke-width="1.1">
<rect x="1388.6" y="833" width="13" height="11.8"/>
<path d="M1392.6 833V839.4H1388.6M1397.2 833V839.4H1392.6"/>
</g>
<path d="M1421.8 838.8H1429.6" stroke="#8a8a8a" stroke-width="1.1"/>
<path d="M1435 839.2H1539" stroke="#8a8a8a" stroke-width="1"/>
<rect x="1485" y="834" width="4.6" height="11" fill="#666"/>
<path d="M1544 839H1552M1548 835V843" stroke="#8a8a8a" stroke-width="1.1"/>
<!-- accessibility -->
<g stroke="#2a2a2a" stroke-width="1.05" stroke-linejoin="round" stroke-linecap="round">
<circle cx="69" cy="834.2" r="1.8"/>
<path d="M63.4 836C62.6 834.6 64.4 833.6 65.2 834.8L66.6 836.8H71.4L72.8 834.8C73.6 833.6 75.4 834.6 74.6 836L72.4 839.2"/>
<path d="M65.6 839.2L63.4 836M65.6 839.2L64.6 846.8M67 847L69 842.4L70.2 845"/>
<path d="M72.6 840.4C72.6 838.2 76.6 838.2 76.6 840.6C76.6 842.2 74.6 842.2 74.6 844M74.6 846V846.2"/>
</g>
</svg>
<div id="status" class="abs">
<span class="abs st" style="left:11.8px;top:4.5px;letter-spacing:-.5px">Ready</span>
<span class="abs st" style="left:81.2px;top:4.5px;letter-spacing:-.28px">Accessibility: Unavailable</span>
<span class="abs st" style="left:1567px;top:4.5px;letter-spacing:-.7px;font-size:10.9px">100%</span>
</div>

</body>
</html>
